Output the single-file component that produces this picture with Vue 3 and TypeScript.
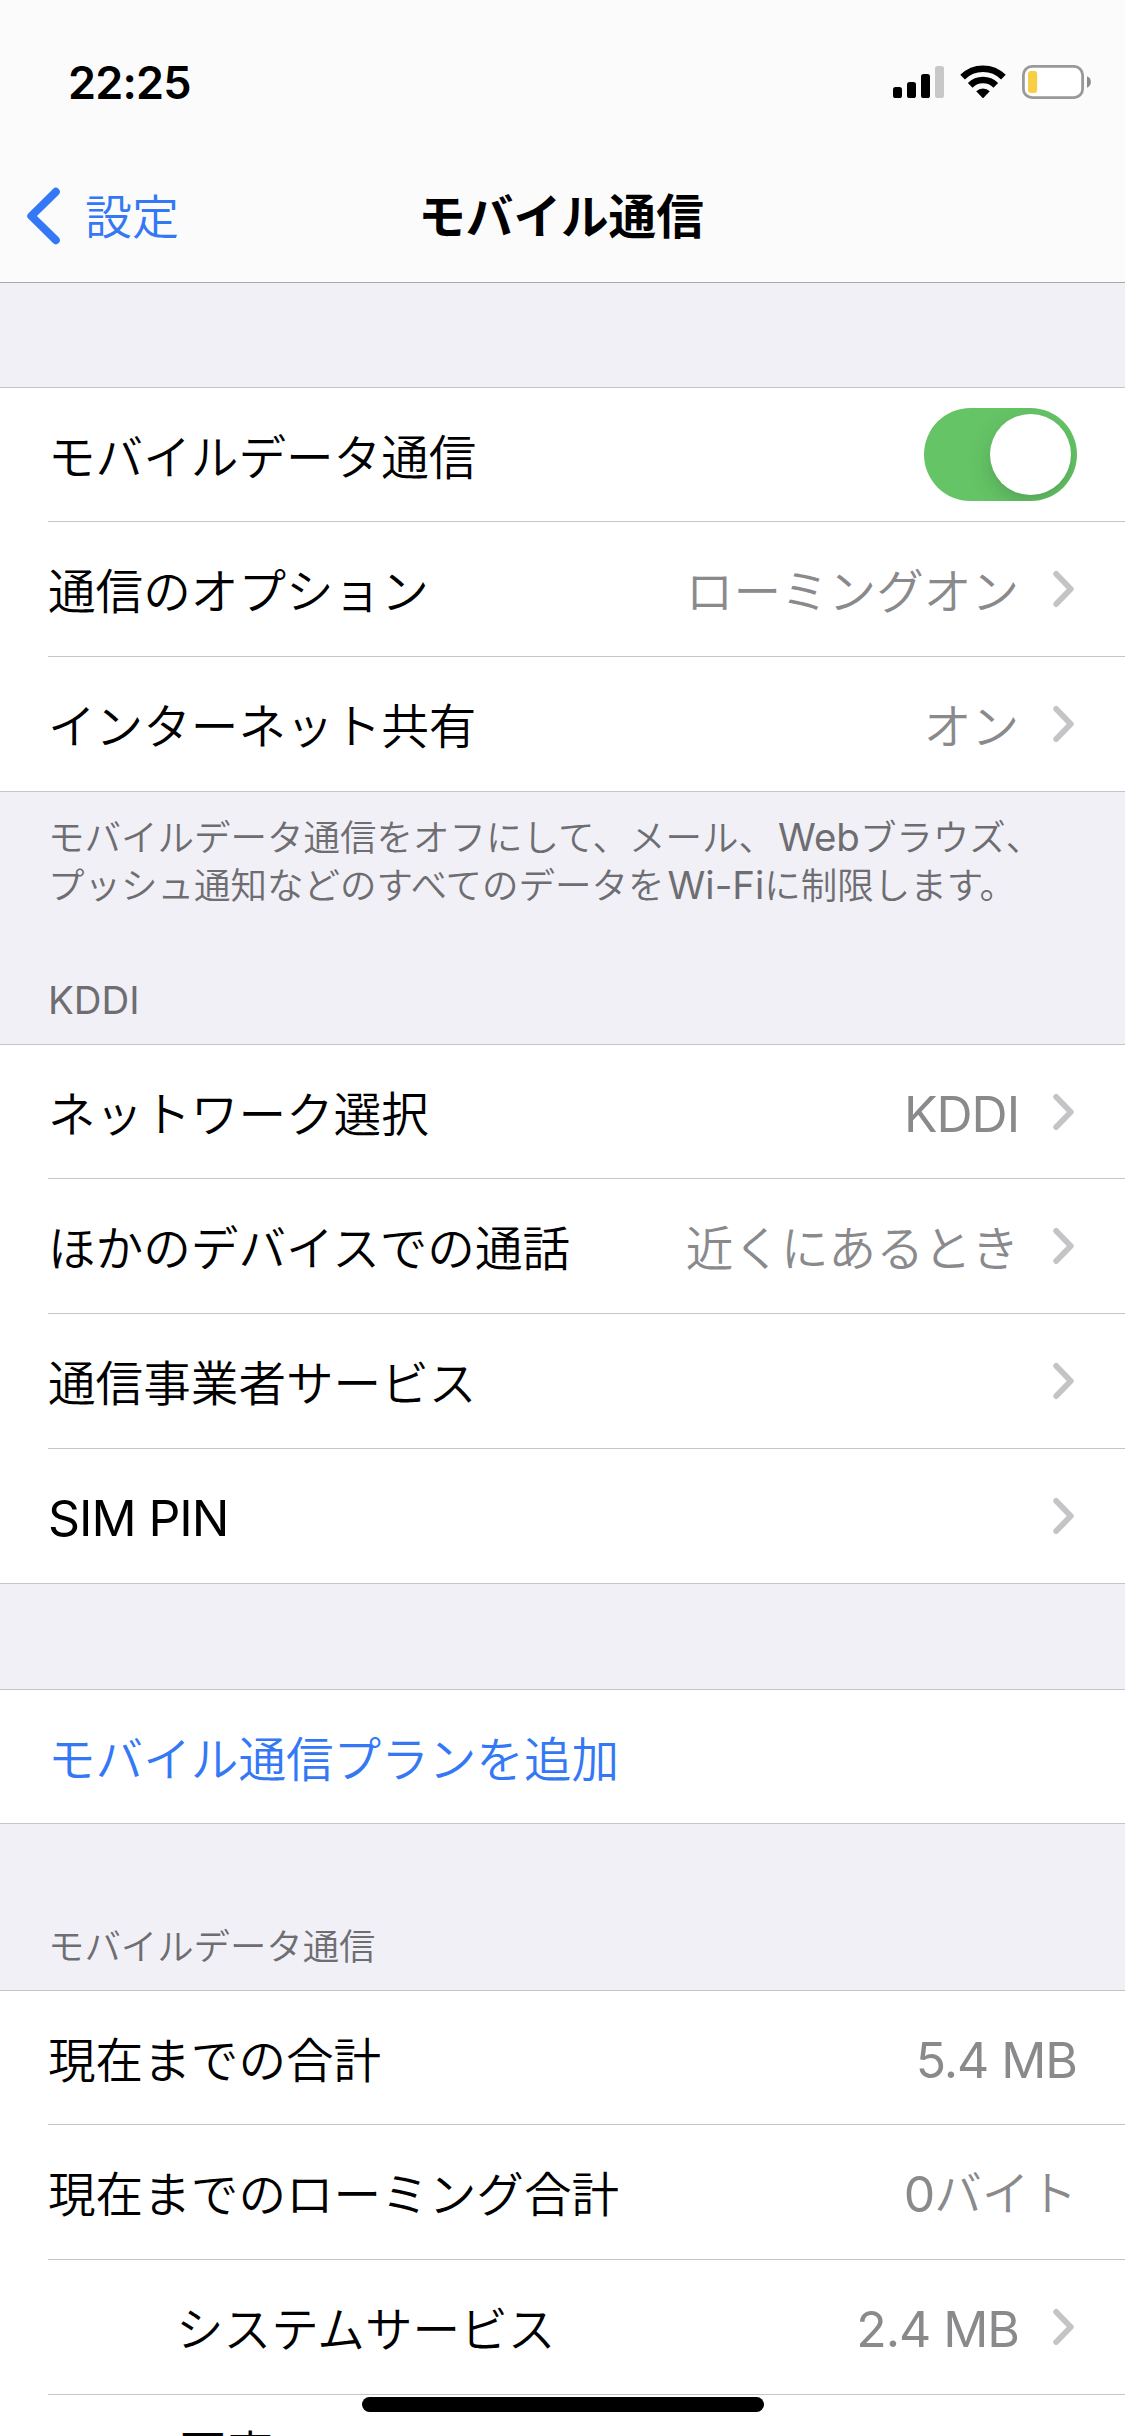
<script setup lang="ts">
interface Row {
  label: string
  value?: string
  toggle?: boolean
  chevron?: boolean
  link?: boolean
  indent?: boolean
}

interface Group {
  id: string
  gap?: boolean
  header?: string
  footer?: string[]
  rows: Row[]
}

interface Run {
  text: string
  latin: boolean
}

const groups: Group[] = [
  {
    id: 'data',
    gap: true,
    rows: [
      { label: 'モバイルデータ通信', toggle: true },
      { label: '通信のオプション', value: 'ローミングオン', chevron: true },
      { label: 'インターネット共有', value: 'オン', chevron: true },
    ],
    footer: [
      'モバイルデータ通信をオフにして、メール、Webブラウズ、',
      'プッシュ通知などのすべてのデータをWi-Fiに制限します。',
    ],
  },
  {
    id: 'carrier',
    header: 'KDDI',
    rows: [
      { label: 'ネットワーク選択', value: 'KDDI', chevron: true },
      { label: 'ほかのデバイスでの通話', value: '近くにあるとき', chevron: true },
      { label: '通信事業者サービス', chevron: true },
      { label: 'SIM PIN', chevron: true },
    ],
  },
  {
    id: 'plan',
    gap: true,
    rows: [{ label: 'モバイル通信プランを追加', link: true }],
  },
  {
    id: 'usage',
    header: 'モバイルデータ通信',
    rows: [
      { label: '現在までの合計', value: '5.4 MB' },
      { label: '現在までのローミング合計', value: '0バイト' },
      { label: 'システムサービス', value: '2.4 MB', chevron: true, indent: true },
    ],
  },
]

// Latin runs get their own face and size next to Japanese text.
function runs(text: string): Run[] {
  return (text.match(/[\x20-\x7e]+|[^\x20-\x7e]+/g) ?? []).map((part) => ({
    text: part,
    latin: /^[\x20-\x7e]/.test(part),
  }))
}
</script>

<template>
  <div class="screen">
    <header class="top">
      <div class="status">
        <span class="time">22:25</span>
        <div class="indicators">
          <svg class="signal" width="51" height="34" viewBox="0 0 51 34">
            <rect x="0" y="22" width="9" height="11" rx="2.6" />
            <rect x="14" y="17" width="9" height="16" rx="2.6" />
            <rect x="28" y="9" width="9" height="24" rx="2.6" />
            <rect x="42" y="1" width="9" height="32" rx="2.6" fill="#c8c8c8" />
          </svg>
          <svg class="wifi" width="46" height="34" viewBox="0 0 46 34">
            <g fill="none" stroke="#000" stroke-width="6.6">
              <path d="M2.6 12.1 A29 29 0 0 1 43.4 12.1" />
              <path d="M10.2 20.4 A18 18 0 0 1 35.8 20.4" />
            </g>
            <path d="M16.2 26.2 A10 10 0 0 1 29.8 26.2 L23.6 32.7 Q23 33.2 22.4 32.7 Z" />
          </svg>
          <svg class="battery" width="70" height="34" viewBox="0 0 70 34">
            <rect x="1.4" y="1.4" width="59.2" height="31.2" rx="8.6" fill="#fff" stroke="#999" stroke-width="2.8" />
            <rect x="6" y="6" width="9.2" height="22" rx="3" fill="#f7ce46" />
            <path d="M65 11.3 C70.2 13.4 70.2 20.6 65 22.7 Z" fill="#8c8c8c" />
          </svg>
        </div>
      </div>
      <nav class="nav">
        <a class="back">
          <svg width="36" height="58" viewBox="0 0 36 58">
            <path d="M30.8 4.8 L6.3 29 L30.8 53.2" fill="none" stroke="#3478f6" stroke-width="8" stroke-linecap="round" stroke-linejoin="round" />
          </svg>
          <span>設定</span>
        </a>
        <h1 class="title">モバイル通信</h1>
        <span class="side"></span>
      </nav>
    </header>

    <main>
      <section v-for="group in groups" :key="group.id">
        <div v-if="group.gap" class="gap" :class="'gap-' + group.id"></div>
        <h2 v-if="group.header" class="header" :class="'header-' + group.id">
          <span class="line"><span v-for="(run, i) in runs(group.header)" :key="i" :class="{ latin: run.latin }">{{ run.text }}</span></span>
        </h2>
        <ul class="list">
          <li v-for="row in group.rows" :key="row.label" class="row">
            <div class="cell">
              <span class="label" :class="{ link: row.link, indent: row.indent }">
                <span v-for="(run, i) in runs(row.label)" :key="i" :class="{ latin: run.latin }">{{ run.text }}</span>
              </span>
              <span v-if="row.value" class="value">
                <span v-for="(run, i) in runs(row.value)" :key="i" :class="{ latin: run.latin }">{{ run.text }}</span>
              </span>
              <span v-if="row.toggle" class="toggle"><span class="knob"></span></span>
              <svg v-if="row.chevron" class="chevron" width="24" height="38" viewBox="0 0 24 38">
                <path d="M3.2 3.9 L17.8 19 L3.2 34.1" fill="none" stroke="#c4c4c6" stroke-width="5.8" stroke-linecap="round" stroke-linejoin="round" />
              </svg>
            </div>
          </li>
          <li v-if="group.id === 'usage'" class="row tall">
            <div class="cell"><span class="label indent">写真</span></div>
          </li>
        </ul>
        <p v-if="group.footer" class="footer">
          <span v-for="line in group.footer" :key="line" class="line"><span v-for="(run, i) in runs(line)" :key="i" :class="{ latin: run.latin }">{{ run.text }}</span></span>
        </p>
      </section>
    </main>
    <div class="home"></div>
  </div>
</template>

<style>
body {
  margin: 0;
  background: #f1f0f6;
}
</style>

<style scoped>
.screen {
  position: relative;
  width: 1125px;
  height: 2436px;
  overflow: hidden;
  background: #f1f0f6;
  color: #000;
  font-family: "Noto Sans CJK JP", sans-serif;
  font-size: 47.6px;
  font-weight: 350;
  line-height: 70px;
  white-space: pre;
}

.latin {
  position: relative;
  top: 1px;
  font-family: Inter, "Liberation Sans", sans-serif;
  font-size: 1.05em;
  font-weight: 400;
  letter-spacing: -0.021em;
}

.top {
  box-sizing: border-box;
  height: 283px;
  background: #fbfbfc;
  border-bottom: 1px solid #a9a9ab;
}

.status {
  box-sizing: border-box;
  height: 145px;
  padding: 65px 34px 0 68px;
  display: flex;
  justify-content: space-between;
  align-items: flex-start;
}

.time {
  font-family: Inter, "Liberation Sans", sans-serif;
  font-size: 45px;
  font-weight: 600;
  line-height: 35px;
  letter-spacing: -0.8px;
}

.indicators {
  display: flex;
}

.wifi {
  margin-left: 16px;
}

.battery {
  margin-left: 16px;
  margin-right: -1px;
}

.nav {
  height: 137px;
  display: flex;
  align-items: center;
}

.back,
.side {
  flex: 1;
}

.back {
  display: flex;
  align-items: center;
  padding-left: 25px;
  color: #3478f6;
}

.back span {
  margin-left: 24px;
  font-size: 47px;
}

.back svg {
  position: relative;
  top: 2px;
}

.title {
  margin: 0;
  font-size: 47.6px;
  font-weight: 600;
}

.side {
  padding-left: 28px;
}

.gap-data {
  height: 104px;
}

.gap-plan {
  height: 105px;
}

.header {
  box-sizing: border-box;
  margin: 0;
  padding: 0 48px 22px;
  display: flex;
  align-items: flex-end;
  color: #6d6d72;
  font-size: 36.4px;
  font-weight: 350;
  line-height: 48px;
}

.header-carrier {
  height: 136px;
}

.header-usage {
  height: 166px;
}

.list {
  margin: 0;
  padding: 0;
  list-style: none;
  background: #fff;
  border-top: 1px solid #c5c5c7;
  border-bottom: 1px solid #c5c5c7;
}

.row {
  padding-left: 48px;
}

.cell {
  height: 134px;
  padding-right: 48px;
  display: flex;
  align-items: center;
  border-bottom: 1px solid #c5c5c7;
}

.row:first-child .cell {
  height: 133px;
}

.row:last-child .cell {
  border-bottom: 0;
}

.label {
  flex: 1;
}

.indent {
  padding-left: 128px;
}

.link {
  color: #3478f6;
}

.value {
  color: #8a8a8d;
}

.chevron {
  margin-left: 34px;
}

.tall .cell {
  height: 180px;
  align-items: flex-start;
}

.tall .label {
  padding-top: 21px;
  padding-left: 131px;
}

.toggle {
  box-sizing: border-box;
  width: 153px;
  height: 93px;
  padding: 6px;
  display: flex;
  justify-content: flex-end;
  border-radius: 47px;
  background: #65c466;
  overflow: hidden;
}

.knob {
  width: 81px;
  height: 81px;
  border-radius: 50%;
  background: #fff;
  box-shadow: 0 9px 24px rgba(0, 0, 0, 0.15), 0 3px 3px rgba(0, 0, 0, 0.02);
}

.footer {
  box-sizing: border-box;
  height: 116px;
  margin: 0;
  padding: 20px 0 0 48px;
  color: #6d6d72;
  font-size: 36.5px;
  line-height: 48px;
}

.line {
  display: block;
  height: 48px;
}

.footer .latin,
.header .latin {
  top: 0;
  font-size: 38.4px;
  letter-spacing: 0;
}

.footer .latin {
  margin-left: 3px;
}

.home {
  position: absolute;
  left: 362px;
  top: 2397px;
  width: 402px;
  height: 15px;
  border-radius: 8px;
  background: #000;
}
</style>
